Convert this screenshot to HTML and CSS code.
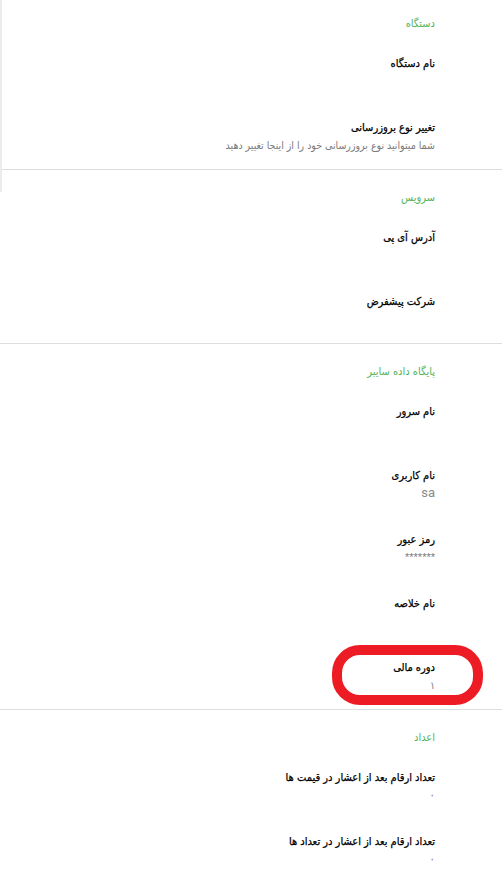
FILE: index.html
```html
<!DOCTYPE html>
<html lang="fa" dir="rtl">
<head>
<meta charset="utf-8">
<title>تنظیمات</title>
<link rel="stylesheet" href="styles.css">
</head>
<body>
<div class="screen">
  <div class="edge"></div>
  <section class="group first">
    <div class="cat">دستگاه</div>
    <div class="item"><div class="title">نام دستگاه</div><div class="summary"></div></div>
    <div class="item"><div class="title">تغییر نوع بروزرسانی</div><div class="summary">شما میتوانید نوع بروزرسانی خود را از اینجا تغییر دهید</div></div>
  </section>
  <section class="group">
    <div class="cat">سرویس</div>
    <div class="item"><div class="title">آدرس آی پی</div><div class="summary"></div></div>
    <div class="item"><div class="title">شرکت پیشفرض</div><div class="summary"></div></div>
  </section>
  <section class="group">
    <div class="cat">پایگاه داده سایبر</div>
    <div class="item"><div class="title">نام سرور</div><div class="summary"></div></div>
    <div class="item"><div class="title">نام کاربری</div><div class="summary latin">sa</div></div>
    <div class="item"><div class="title">رمز عبور</div><div class="summary stars">*******</div></div>
    <div class="item"><div class="title">نام خلاصه</div><div class="summary"></div></div>
    <div class="item marked"><div class="title">دوره مالی</div><div class="summary">۱</div><div class="highlight"></div></div>
  </section>
  <section class="group last">
    <div class="cat">اعداد</div>
    <div class="item"><div class="title">تعداد ارقام بعد از اعشار در قیمت ها</div><div class="summary digit">۰</div></div>
    <div class="item"><div class="title">تعداد ارقام بعد از اعشار در تعداد ها</div><div class="summary digit">۰</div></div>
  </section>
</div>
</body>
</html>
```

FILE: styles.css
```css
html, body {
  margin: 0;
  padding: 0;
  background: #ffffff;
}
body {
  font-family: "DejaVu Sans Condensed", "DejaVu Sans", sans-serif;
  direction: rtl;
}
.screen {
  position: relative;
  width: 502px;
  height: 872px;
  overflow: hidden;
}
.edge {
  position: absolute;
  left: 0;
  top: 0;
  width: 2px;
  height: 192px;
  background: #ececec;
}
.group {
  border-bottom: 1px solid #dedede;
}
.group.last {
  border-bottom: none;
}
.cat {
  height: 45px;
  padding: 20px 67px 0 0;
  box-sizing: border-box;
  font-size: 11px;
  line-height: 16px;
  color: #55b35a;
}
.group.first .cat {
  height: 41px;
  padding-top: 16px;
}
.item {
  height: 64px;
  padding: 14px 67px 0 0;
  box-sizing: border-box;
}
.title {
  font-size: 11px;
  line-height: 17px;
  color: #000;
  -webkit-text-stroke: 0.25px #000;
}
.summary {
  font-size: 10.5px;
  line-height: 18px;
  color: #7a7a7a;
  min-height: 18px;
}
.summary.latin {
  font-family: Roboto, "Liberation Sans", sans-serif;
  font-size: 13px;
  color: #8a8a8a;
}
.summary.stars {
  font-family: "Liberation Sans", sans-serif;
  font-size: 11px;
}
.summary.digit {
  font-size: 12px;
}
.marked {
  position: relative;
}
.highlight {
  position: absolute;
  top: 0;
  right: 19px;
  width: 151px;
  height: 60px;
  box-sizing: border-box;
  border: 10px solid #ed1c24;
  border-radius: 28px;
}
```
